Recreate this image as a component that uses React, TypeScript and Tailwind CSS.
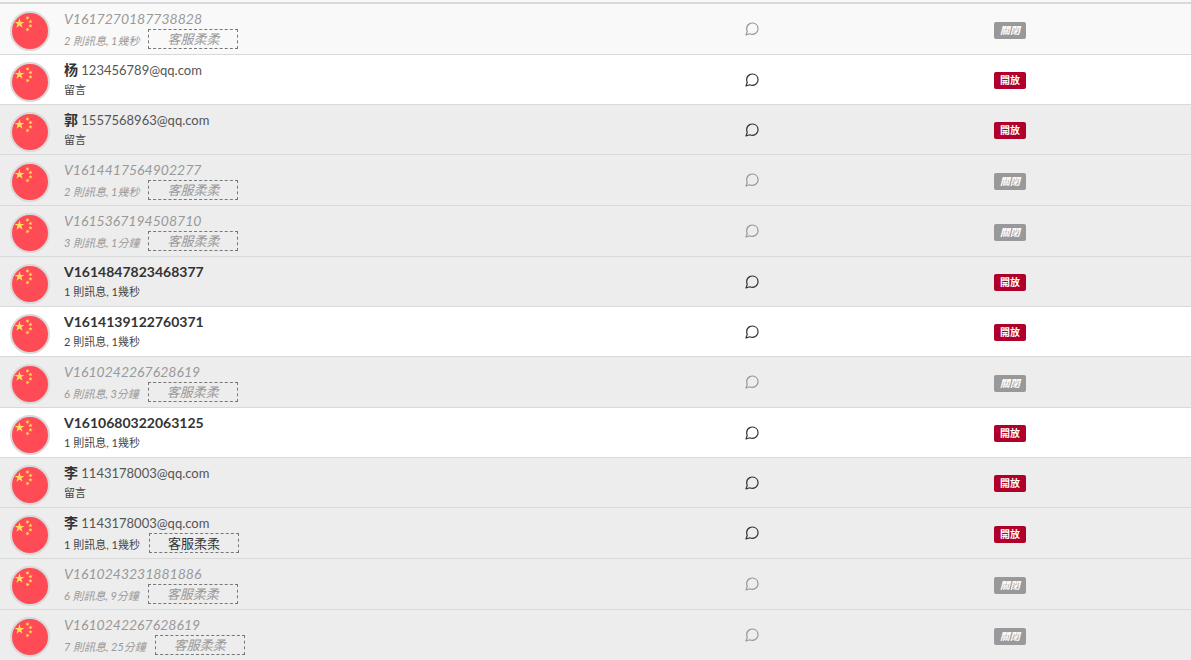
import clsx from "clsx";
import { FiMessageCircle } from "react-icons/fi";

interface Chat {
  name: string;
  email?: string;
  info: string;
  agent?: string;
  closed?: boolean;
  bg: string;
}

const GRAY = "bg-[#ededed]";
const LIGHT = "bg-[#f9f9f9]";
const WHITE = "bg-white";

const chats: Chat[] = [
  { name: "V1617270187738828", info: "2 則訊息, 1幾秒", agent: "客服柔柔", closed: true, bg: LIGHT },
  { name: "杨", email: "123456789@qq.com", info: "留言", bg: WHITE },
  { name: "郭", email: "1557568963@qq.com", info: "留言", bg: GRAY },
  { name: "V1614417564902277", info: "2 則訊息, 1幾秒", agent: "客服柔柔", closed: true, bg: GRAY },
  { name: "V1615367194508710", info: "3 則訊息, 1分鐘", agent: "客服柔柔", closed: true, bg: GRAY },
  { name: "V1614847823468377", info: "1 則訊息, 1幾秒", bg: GRAY },
  { name: "V1614139122760371", info: "2 則訊息, 1幾秒", bg: WHITE },
  { name: "V1610242267628619", info: "6 則訊息, 3分鐘", agent: "客服柔柔", closed: true, bg: GRAY },
  { name: "V1610680322063125", info: "1 則訊息, 1幾秒", bg: WHITE },
  { name: "李", email: "1143178003@qq.com", info: "留言", bg: GRAY },
  { name: "李", email: "1143178003@qq.com", info: "1 則訊息, 1幾秒", agent: "客服柔柔", bg: GRAY },
  { name: "V1610243231881886", info: "6 則訊息, 9分鐘", agent: "客服柔柔", closed: true, bg: GRAY },
  { name: "V1610242267628619", info: "7 則訊息, 25分鐘", agent: "客服柔柔", closed: true, bg: GRAY },
];

const star = "0,-1 .22,-.31 .95,-.31 .36,.12 .59,.81 0,.38 -.59,.81 -.36,.12 -.95,-.31 -.22,-.31";

const Flag = () => (
  <svg viewBox="0 0 40 40" className="size-10 shrink-0" role="img" aria-label="China">
    <circle cx="20" cy="20" r="19" fill="#ff4b55" stroke="#d9d9d9" strokeWidth="2" />
    <g fill="#ffe15a">
      <polygon points={star} transform="translate(9.5 12.5) scale(5.2)" />
      <polygon points={star} transform="translate(17.5 7) rotate(20) scale(2.3)" />
      <polygon points={star} transform="translate(20.5 10.5) rotate(-10) scale(2.3)" />
      <polygon points={star} transform="translate(20.5 15) scale(2.3)" />
      <polygon points={star} transform="translate(17.5 18.5) rotate(20) scale(2.3)" />
    </g>
  </svg>
);

const ChatRow = ({ name, email, info, agent, closed, bg }: Chat) => (
  <tr className={clsx(bg, closed ? "italic text-[#999]" : "text-[#333]")}>
    <td className="p-0 align-top">
      <div className="flex gap-3.5 pl-2.5">
        <div className="pt-[7px]">
          <Flag />
        </div>
        <div className="pt-[5px] whitespace-nowrap">
          <div className="text-sm leading-5">
            <span className={closed ? "font-normal" : "font-bold"}>{name}</span>
            {email && <span className="text-[13px] text-[#555]"> {email}</span>}
          </div>
          <div className={clsx("mb-[5px] flex gap-[9px]", agent ? "h-5 items-end" : "h-[19px] items-center")}>
            <span className={clsx("text-[11px] leading-4", !closed && "text-[#444]")}>{info}</span>
            {agent && (
              <span className="h-5 w-[90px] border border-dashed border-[#777] text-center text-[13px] leading-[18px]">
                {agent}
              </span>
            )}
          </div>
        </div>
      </div>
    </td>
    <td className="p-0 text-center align-middle">
      <button type="button" aria-label="Chat" className="mx-auto block">
        <FiMessageCircle size={16} strokeWidth={1.8} />
      </button>
    </td>
    <td className="p-0 text-center align-middle">
      <span
        className={clsx(
          "mx-auto mt-0.5 block w-8 rounded-xs text-[10px] leading-[17px] font-bold text-white",
          closed ? "bg-[#999]" : "bg-[#b00029]"
        )}
      >
        {closed ? "關閉" : "開放"}
      </span>
    </td>
  </tr>
);

const App = () => {
  return (
    <div className="overflow-hidden bg-[#f9f9f9] pt-0.5 font-[Lato,'Noto_Sans_CJK_TC',sans-serif]">
      <table
        lang="zh-Hant"
        className="w-full table-fixed border-separate border-spacing-0 border-t-2 border-[#d9d9d9] [&_td]:border-b [&_td]:border-[#d9d9d9]"
      >
        <colgroup>
          <col className="w-[56.7%]" />
          <col className="w-[12.9%]" />
          <col className="w-[30.4%]" />
        </colgroup>
        <tbody>
          {chats.map((chat, i) => (
            <ChatRow key={i} {...chat} />
          ))}
        </tbody>
      </table>
    </div>
  );
};

export default App;
